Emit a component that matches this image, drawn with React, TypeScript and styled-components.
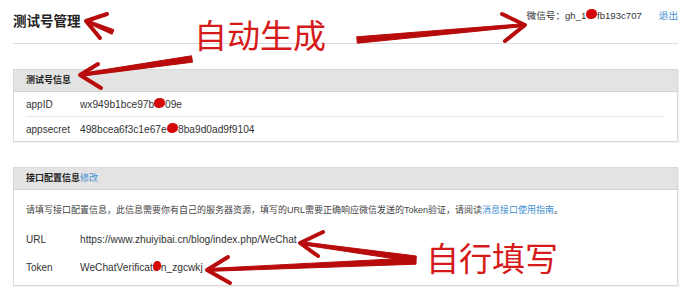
import React from "react";
import styled, { createGlobalStyle } from "styled-components";

const GlobalStyle = createGlobalStyle`
  body {
    margin: 0;
    background: #ffffff;
    font-family: "Liberation Sans", "Noto Sans CJK SC", sans-serif;
  }
`;

interface Field {
  label: string;
  value: React.ReactNode;
}

const App: React.FC = () => {
  const testFields: Field[] = [
    {
      label: "appID",
      value: (
        <>
          wx949b1bce97b<Blob>c2</Blob>09e
        </>
      ),
    },
    {
      label: "appsecret",
      value: (
        <>
          498bcea6f3c1e67e<Blob>a1</Blob>8ba9d0ad9f9104
        </>
      ),
    },
  ];

  const apiFields: Field[] = [
    { label: "URL", value: "https://www.zhuiyibai.cn/blog/index.php/WeChat" },
    {
      label: "Token",
      value: (
        <>
          WeChatVerificat<Blob>io</Blob>n_zgcwkj
        </>
      ),
    },
  ];

  return (
    <Page>
      <GlobalStyle />
      <Header>
        <Title>测试号管理</Title>
        <Account>
          <span>
            微信号：gh_1<Blob>23</Blob>fb193c707
          </span>
          <Link>退出</Link>
        </Account>
      </Header>

      <Panel>
        <PanelHead>测试号信息</PanelHead>
        {testFields.map((f) => (
          <InfoRow key={f.label}>
            <Label>{f.label}</Label>
            <Value>{f.value}</Value>
          </InfoRow>
        ))}
      </Panel>

      <Panel>
        <PanelHead>
          接口配置信息<Link>修改</Link>
        </PanelHead>
        <PanelBody>
          <Desc>
            请填写接口配置信息，此信息需要你有自己的服务器资源，填写的URL需要正确响应微信发送的Token验证，请阅读
            <Link>消息接口使用指南</Link>。
          </Desc>
          {apiFields.map((f) => (
            <ConfigRow key={f.label}>
              <Label>{f.label}</Label>
              <Value>{f.value}</Value>
            </ConfigRow>
          ))}
        </PanelBody>
      </Panel>

      <Note style={{ left: 194, top: 14 }}>自动生成</Note>
      <Note style={{ left: 426, top: 237 }}>自行填写</Note>
      <Arrows />
    </Page>
  );
};

export default App;

type Pt = [number, number];

// tapered shaft: wide at the tail, thin at the tip
function shaft(tail: Pt, tip: Pt, w0: number, w1: number) {
  const dx = tip[0] - tail[0];
  const dy = tip[1] - tail[1];
  const len = Math.hypot(dx, dy);
  const nx = -dy / len;
  const ny = dx / len;
  const p = (x: number, y: number) => `${x.toFixed(1)},${y.toFixed(1)}`;
  return [
    p(tail[0] + nx * w0, tail[1] + ny * w0),
    p(tip[0] + nx * w1, tip[1] + ny * w1),
    p(tip[0] - nx * w1, tip[1] - ny * w1),
    p(tail[0] - nx * w0, tail[1] - ny * w0),
  ].join(" ");
}

// hand-drawn red annotation arrows
function Arrows() {
  const arrows: { tail: Pt; tip: Pt; head: string; w: number }[] = [
    { tail: [113, 32], tip: [86, 21], head: "M107 14 L86 21 L100 38", w: 2.5 },
    { tail: [357, 40], tip: [525, 25], head: "M502 14 L525 25 L505 41", w: 3.2 },
    { tail: [192, 59], tip: [80, 75], head: "M98 64 L80 75 L101 88", w: 3.2 },
    { tail: [416, 259], tip: [300, 243], head: "M323 232 L300 243 L318 256", w: 3 },
    { tail: [416, 261], tip: [207, 270], head: "M228 257 L207 270 L230 283", w: 3.2 },
  ];
  return (
    <ArrowLayer width="691" height="304" viewBox="0 0 691 304">
      {arrows.map((a, i) => (
        <g key={i}>
          <polygon points={shaft(a.tail, a.tip, a.w, 1.4)} />
          <Head d={a.head} />
        </g>
      ))}
    </ArrowLayer>
  );
}

const Page = styled.div`
  position: relative;
  width: 691px;
  height: 304px;
  padding: 0 13px;
  box-sizing: border-box;
  overflow: hidden;
  color: #333333;
`;

const Header = styled.div`
  display: flex;
  justify-content: space-between;
  align-items: flex-start;
  height: 44px;
  box-sizing: border-box;
  border-bottom: 1px solid #dcdcdc;
`;

const Title = styled.h1`
  margin: 13px 0 0 0;
  font-size: 13.5px;
  line-height: 18px;
  font-weight: bold;
  color: #222222;
`;

const Account = styled.div`
  display: flex;
  gap: 17px;
  margin-top: 9px;
  font-size: 9.6px;
  line-height: 14px;
  color: #333333;
`;

const Link = styled.a`
  color: #3f8fd2;
  cursor: pointer;
`;

const Blob = styled.span`
  display: inline-block;
  color: transparent;
  background: #d40a0a;
  border-radius: 50% 45% 50% 40%;
  line-height: 10px;
  transform: translateY(-2px);
`;

const Panel = styled.div`
  margin-top: 25px;
  border: 1px solid #d9d9d9;
  box-shadow: 1px 1px 1px rgba(0, 0, 0, 0.06);

  &:first-of-type {
    margin-top: 26px;
  }
`;

const PanelHead = styled.div`
  height: 21px;
  line-height: 21px;
  padding: 0 12px;
  background: #e3e3e3;
  border-bottom: 1px solid #d2d2d2;
  font-size: 9px;
  font-weight: bold;
  color: #222222;

  ${Link} {
    font-weight: normal;
  }
`;

const InfoRow = styled.div`
  display: flex;
  align-items: center;
  height: 24px;
  margin: 0 12px;

  & + & {
    border-top: 1px solid #e8e8e8;
  }
`;

const PanelBody = styled.div`
  padding: 9px 12px 4px;
`;

const Desc = styled.div`
  font-size: 9px;
  line-height: 22px;
  color: #444444;
  margin-bottom: 4px;
  white-space: nowrap;
`;

const ConfigRow = styled.div`
  display: flex;
  align-items: center;
  height: 28px;
`;

const Label = styled.span`
  width: 54px;
  font-size: 10px;
  color: #333333;
`;

const Value = styled.span`
  font-size: 10.2px;
  color: #333333;
`;

const Note = styled.div`
  position: absolute;
  font-family: "Noto Sans CJK SC", sans-serif;
  font-size: 33px;
  line-height: 40px;
  color: #d51a1a;
  white-space: nowrap;
`;

const ArrowLayer = styled.svg`
  position: absolute;
  left: 0;
  top: 0;
  pointer-events: none;

  polygon {
    fill: #b80c0c;
    stroke: #b80c0c;
    stroke-width: 1;
    stroke-linejoin: round;
  }
`;

const Head = styled.path`
  fill: none;
  stroke: #b80c0c;
  stroke-width: 4;
  stroke-linecap: round;
  stroke-linejoin: round;
`;
